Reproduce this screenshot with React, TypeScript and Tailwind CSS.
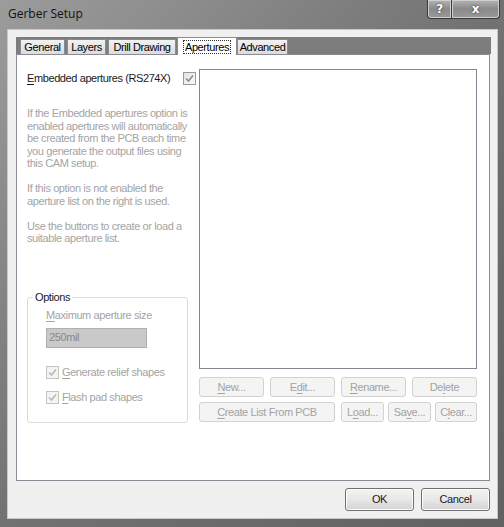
import React from 'react'

const FONT = "font-['Liberation_Sans',Tahoma,sans-serif]"

const U = ({ children }: { children: React.ReactNode }) => (
  <span className="underline underline-offset-[2px] decoration-[1px]">{children}</span>
)

const Check = ({ disabled = false }: { disabled?: boolean }) => (
  <span
    className={`flex shrink-0 items-center justify-center w-[13px] h-[13px] border ${
      disabled ? 'border-[#c4c4c4] bg-[#f4f4f4]' : 'border-[#9a9a9a] bg-gradient-to-br from-[#e4e4e4] to-[#fafafa]'
    }`}
  >
    <svg width="9" height="9" viewBox="0 0 9 9">
      <path
        d="M1 4.5 L3.5 7 L8 1.5"
        fill="none"
        stroke={disabled ? '#b8b8b8' : '#8c8c8c'}
        strokeWidth="1.6"
      />
    </svg>
  </span>
)

const DisabledButton = ({ className = '', children }: { className?: string; children: React.ReactNode }) => (
  <div
    className={`h-[20px] flex items-center justify-center rounded-[3px] border border-[#d2d2d2] bg-[#f4f4f4] text-[#a3a3a3] ${className}`}
  >
    {children}
  </div>
)

const DialogButton = ({ children }: { children: React.ReactNode }) => (
  <div className="w-[69px] h-[23px] flex items-center justify-center rounded-[3px] border border-[#707070] bg-gradient-to-b from-[#f3f3f3] via-[#e8e8e8] to-[#d2d2d2] text-[#1a1a1a] shadow-[inset_0_0_0_1px_#fcfcfc]">
    {children}
  </div>
)

const Tab = ({ label, width, active = false }: { label: string; width: string; active?: boolean }) =>
  active ? (
    <div className={`${width} h-[18px] -mb-px bg-white border border-b-0 border-[#898c95] flex items-center justify-center z-10`}>
      <span className="border border-dotted border-[#333] px-[1px] leading-[12px]">{label}</span>
    </div>
  ) : (
    <div className={`${width} h-[15px] bg-gradient-to-b from-[#f2f2f2] to-[#dcdcdc] border border-b-0 border-[#898c95] flex items-center justify-center`}>
      {label}
    </div>
  )

export default function App() {
  return (
    <div className={`w-[504px] h-[527px] flex flex-col bg-gradient-to-br from-[#9c9c9c] via-[#727272] to-[#616161] text-[11px] tracking-[-0.4px] leading-[13px] ${FONT}`}>
      <div className="h-[29px] flex items-start">
        <div className="pl-[8px] pt-[7px] text-[12px] tracking-normal text-[#111] font-['Open_Sans',sans-serif]">Gerber Setup</div>
        <div className="ml-auto mr-[4px] flex">
          <div className="w-[25px] h-[19px] rounded-bl-[4px] border border-t-0 border-[#3a3a3a] bg-gradient-to-b from-[#b4b4b4] via-[#8a8a8a] to-[#9a9a9a] shadow-[inset_0_0_0_1px_#cfcfcf] flex items-center justify-center text-white font-bold text-[12px] font-['DejaVu_Sans',sans-serif] [text-shadow:0_0_2px_#222]">
            ?
          </div>
          <div className="w-[48px] h-[19px] rounded-br-[4px] border border-t-0 border-l-0 border-[#3a3a3a] bg-gradient-to-b from-[#b4b4b4] via-[#8a8a8a] to-[#9a9a9a] shadow-[inset_0_0_0_1px_#cfcfcf] flex items-center justify-center text-white font-bold text-[12px] font-['DejaVu_Sans',sans-serif] [text-shadow:0_0_2px_#222]">
            x
          </div>
        </div>
      </div>

      <div className="ml-[7px] mr-[6px] mb-[8px] flex-1 bg-[#f0f0f0] border border-[#c8c8c8] flex flex-col pt-[7px] pl-[8px] pr-[6px]">
        {/* tab control */}
        <div className="w-[475px] flex flex-col">
          <div className="h-[17px] bg-[#7d7d7d] flex items-end pl-[4px] gap-[2px]">
            <Tab label="General" width="w-[45px]" />
            <Tab label="Layers" width="w-[39px]" />
            <Tab label="Drill Drawing" width="w-[68px]" />
            <div className="w-[60px] -ml-[1px] -mr-[2px] flex items-end">
              <Tab label="Apertures" width="w-[60px]" active />
            </div>
            <Tab label="Advanced" width="w-[51px]" />
          </div>

          <div className="w-[474px] h-[427px] bg-white border border-[#898c95] flex pt-[14px] pl-[10px]">
            {/* left column */}
            <div className="w-[172px] flex flex-col">
              <div className="mt-[3px] h-[13px] flex items-center justify-between pr-[3px] text-[#1a1a1a]">
                <span>
                  <U>E</U>mbedded apertures (RS274X)
                </span>
                <Check />
              </div>
              <div className="mt-[22px] text-[#a4a4a4] leading-[12.5px]">
                <p>If the Embedded apertures option is enabled apertures will automatically be created from the PCB each time you generate the output files using this CAM setup.</p>
                <p className="mt-[12.5px]">If this option is not enabled the aperture list on the right is used.</p>
                <p className="mt-[12.5px]">Use the buttons to create or load a suitable aperture list.</p>
              </div>

              <div className="mt-[52px] w-[161px] h-[126px] relative border border-[#dcdcdc] rounded-[3px] pl-[18px] pt-[11px]">
                <span className="absolute -top-[7px] left-[5px] bg-white px-[2px] text-[#1a1a1a]">Options</span>
                <div className="text-[#a4a4a4]">
                  <U>M</U>aximum aperture size
                </div>
                <div className="mt-[6px] w-[101px] h-[20px] bg-[#c9c9c9] border border-[#b0b0b0] flex items-center pl-[2px] text-[#888]">
                  250mil
                </div>
                <div className="mt-[18px] flex items-center gap-[3px] text-[#a4a4a4]">
                  <Check disabled />
                  <span>
                    <U>G</U>enerate relief shapes
                  </span>
                </div>
                <div className="mt-[12px] flex items-center gap-[3px] text-[#a4a4a4]">
                  <Check disabled />
                  <span>
                    <U>F</U>lash pad shapes
                  </span>
                </div>
              </div>
            </div>

            {/* right column */}
            <div className="w-[278px] flex flex-col">
              <div className="h-[300px] border border-[#828790] bg-white" />
              <div className="mt-[8px] grid grid-cols-4 gap-[6px]">
                <DisabledButton>
                  <U>N</U>ew...
                </DisabledButton>
                <DisabledButton>
                  E<U>d</U>it...
                </DisabledButton>
                <DisabledButton>
                  <U>R</U>ename...
                </DisabledButton>
                <DisabledButton>
                  De<U>l</U>ete
                </DisabledButton>
              </div>
              <div className="mt-[5px] flex">
                <DisabledButton className="w-[136px]">
                  <U>C</U>reate List From PCB
                </DisabledButton>
                <DisabledButton className="ml-[6px] w-[43px]">
                  L<U>o</U>ad...
                </DisabledButton>
                <DisabledButton className="ml-[4px] w-[43px]">
                  Sa<U>v</U>e...
                </DisabledButton>
                <DisabledButton className="ml-[4px] flex-1">
                  C<U>l</U>ear...
                </DisabledButton>
              </div>
            </div>
          </div>
        </div>

        <div className="mt-[7px] flex justify-end gap-[7px] pr-[1px]">
          <DialogButton>OK</DialogButton>
          <DialogButton>Cancel</DialogButton>
        </div>
      </div>
    </div>
  )
}
